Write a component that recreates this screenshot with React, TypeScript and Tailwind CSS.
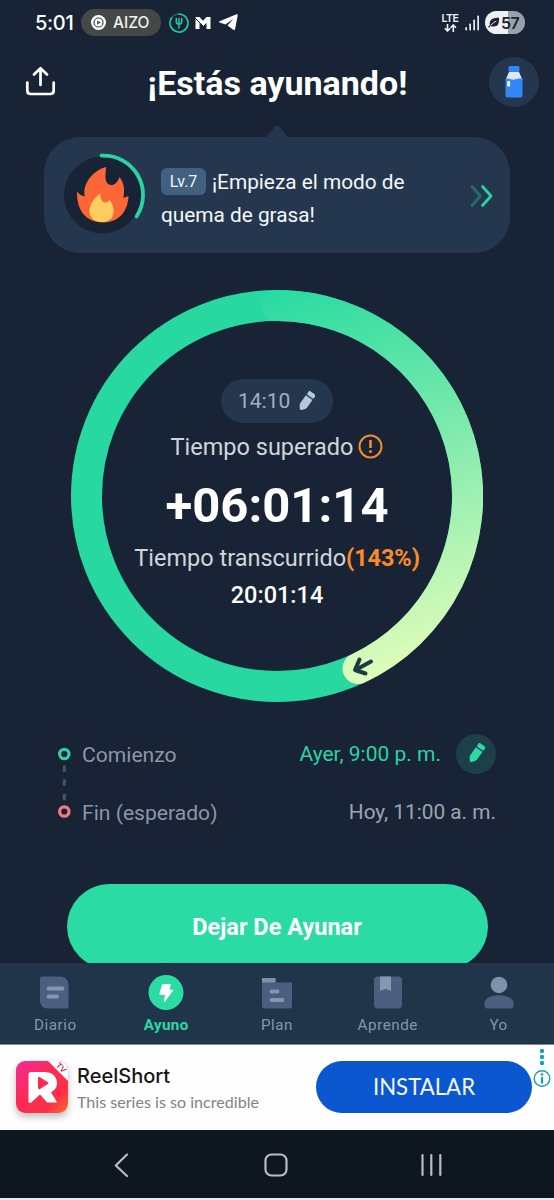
import type { ReactNode } from 'react';

function Pencil({ color, className }: { color: string; className?: string }) {
  return (
    <svg width="18" height="22" viewBox="0 0 20 24" className={className}>
      <g fill={color} transform="rotate(36 10 12)">
        <rect x="5.500" y="-0.5" width="9" height="5" rx="1.400" />
        <path d="M5.500 6h9v10.500c0 1-.3 1.700-.8 2.400L11.300 22c-.8 1-1.800 1-2.600 0L6.300 18.900c-.5-.7-.8-1.400-.8-2.400z" />
      </g>
    </svg>
  );
}

function StatusBar() {
  return (
    <div className="flex h-[45px] shrink-0 items-center justify-between pl-[35px] pr-[29px]">
      <div className="flex items-center">
        <span className="w-[46px] font-['Inter'] text-[20px] font-medium leading-6 tracking-[-0.3px] text-white">5:01</span>
        <div className="flex h-[27px] w-[80px] items-center rounded-full bg-[#444846] pl-[10px]">
          <svg width="15" height="15" viewBox="0 0 16 16">
            <circle cx="8" cy="8" r="8" fill="#fff" />
            <circle cx="8" cy="8" r="4.800" fill="none" stroke="#444846" strokeWidth="1.300" />
            <path d="M6.600 5.800v4.400L10.300 8z" fill="#444846" />
          </svg>
          <span className="ml-[7px] font-['Inter'] text-[15.500px] font-medium leading-5 text-[#f1f1f1]">AIZO</span>
        </div>
        <svg width="20" height="20" viewBox="0 0 20 20" className="ml-2" fill="none" stroke="#22c79b" strokeLinecap="round">
          <path d="M10 1a9 9 0 1 1-7.500 4" strokeWidth="1.700" />
          <path d="M2.500 5A9 9 0 0 1 10 1" strokeWidth="1.200" opacity=".55" />
          <path d="M7.300 5.500V9c0 2.800 5.400 2.800 5.400 0V5.500M10 5.500V15" strokeWidth="1.500" />
        </svg>
        <svg width="16" height="14" viewBox="0 0 16 14" className="ml-[6px]" fill="#fff">
          <path d="M.5 1h4L8 4.800 11.500 1h4v12h-4V7L8 10.300 4.500 7v6h-4z" />
          <path d="M0 2l8.500 8.500" stroke="#182435" strokeWidth="1" />
        </svg>
        <svg width="19" height="17" viewBox="0 0 19 17" className="ml-[8px]" fill="#fff">
          <path d="M.6 7.300L17.500.3c.9-.3 1.400.1 1.200 1.100l-2.600 13.500c-.2 1.100-.9 1.400-1.800.8L8.500 11.500l6-6.700-8 5.600L.7 8.600C-.2 8.300-.2 7.700.6 7.300z" />
        </svg>
      </div>

      <div className="flex items-center">
        <div className="flex w-[18px] flex-col items-center">
          <span className="font-['Inter'] text-[10.500px] font-semibold leading-[10px] tracking-[-0.500px] text-[#eef1f4]">LTE</span>
          <svg width="13" height="8" viewBox="0 0 13 8" fill="none" stroke="#eef1f4" strokeWidth="1.600">
            <path d="M3.500 0v7M.8 4.300l2.700 2.700 2.700-2.700M9.300 8V1M6.600 3.700L9.300 1 12 3.700" />
          </svg>
        </div>
        <svg width="15" height="16" viewBox="0 0 15 16" className="ml-[6px]" fill="#e9edf1">
          <rect x="0.300" y="12" width="1.700" height="3.500" rx=".8" />
          <rect x="4.300" y="8.500" width="1.700" height="7" rx=".8" />
          <rect x="8.300" y="4.500" width="1.700" height="11" rx=".8" />
          <rect x="12.300" y="0.500" width="1.700" height="15" rx=".8" />
        </svg>
        <div className="ml-[5px] flex h-[23px] w-[40px] items-center overflow-hidden rounded-full bg-linear-to-r from-[#eef0f3] from-58% to-[#9aa1ab] to-58% pl-[3px]">
          <svg width="12" height="11" viewBox="0 0 12 11">
            <path d="M2 8.800C.5 3 4.500.6 11 .8c.5 6-1.500 9.600-7 8.600" fill="#182435" />
            <path d="M.5 10.300C3 7 5 5.500 8 4" stroke="#182435" strokeWidth="1.200" fill="none" />
            <path d="M2.600 8.300C4.500 6.400 6 5.200 8.300 4" stroke="#eef0f3" strokeWidth=".9" fill="none" />
          </svg>
          <span className="ml-px font-['Inter'] text-[16px] font-semibold leading-5 tracking-[-0.600px] text-[#182435]">57</span>
        </div>
      </div>
    </div>
  );
}

function Header() {
  return (
    <div className="flex h-[80px] shrink-0 items-start justify-between pl-[25px] pr-[15px] pt-[12px]">
      <svg width="32" height="31" viewBox="0 0 32 31" className="mt-[9px]" fill="none" stroke="#fff" strokeWidth="2.700" strokeLinecap="round" strokeLinejoin="round">
        <path d="M2.300 16.500v8c0 2.200 1.300 3.500 3.500 3.500h19.400c2.200 0 3.500-1.300 3.500-3.500v-8M15.500 19V2.500M9 8.500l6.500-6.300L22 8.500" />
      </svg>
      <h1 className="mt-[6px] pl-[9px] text-[34px] font-bold leading-10 text-white">¡Estás ayunando!</h1>
      <div className="flex size-[50px] items-center justify-center rounded-full bg-[#24374e]">
        <svg width="18" height="32" viewBox="0 0 18 32">
          <path d="M4 6h10l3.500 8H.5z" fill="#dce9fd" />
          <rect x="3.500" y="0" width="11" height="6" rx="1.500" fill="#3288f8" />
          <path d="M.5 13c3-1.600 5.500 1 8.500.6s5.500-1.600 8.500-.6v16.300c0 1.500-.7 2.200-2.200 2.200H2.700C1.200 31.500.5 30.800.5 29.300z" fill="#3288f8" />
          <rect x="2.300" y="15" width="2.800" height="5.500" rx=".8" fill="#fff" />
        </svg>
      </div>
    </div>
  );
}

function LevelCard() {
  return (
    <div className="flex shrink-0 flex-col items-center">
      <svg width="22" height="12" viewBox="0 0 22 12" fill="#24374e">
        <path d="M0 12L9.500 1.200q1.500-1.500 3 0L22 12z" />
      </svg>
      <div className="flex h-[116px] w-[466px] items-center rounded-[36px] bg-[#24374e] pl-[18px]">
        <svg width="84" height="84" viewBox="0 0 84 84">
          <circle cx="40.500" cy="42" r="38.500" fill="#182435" />
          <path d="M39.500 2.700A39.300 39.300 0 0 1 74.600 63.500" fill="none" stroke="#2ad3a2" strokeWidth="3.800" strokeLinecap="round" />
          <path d="M44 14c0 6-1.500 10 .5 15 1.500 3.600 6.500 4 9.300 1.300 2-2 2.800-3.800 3.800-6 4.500 6 5.400 12 3.700 20.500 2-.5 3.700-1.300 5.200-1.800-.5 15-9.500 26.500-25.500 26.500-16 0-26.500-11-26-31 2 2.500 4.500 4.400 7.800 5C20 30 32 17 44 14z" fill="#fd6637" />
          <path d="M38.500 40.500c-.3 4.500 1 9 5 9 2 0 3-1 3.700-2.800 7 7.300 6.300 21.300-5.700 22.300-11 .8-16-7.500-13.500-15 2-6 6.500-11 10.500-13.500z" fill="#fdcd60" />
        </svg>
        <div className="ml-[15px] w-[300px] pt-2 text-[20.800px] leading-[33px] text-[#f4f7fa]">
          <div className="flex items-center">
            <span className="-mt-[3px] mr-[6px] h-[27px] w-[45px] rounded-[6px] bg-[#42607f] text-center text-[16px] leading-[27px]">Lv.7</span>
            ¡Empieza el modo de
          </div>
          <div>quema de grasa!</div>
        </div>
        <svg width="24" height="24" viewBox="0 0 24 24" className="ml-[8px] mt-px" fill="none" strokeWidth="2.700" strokeLinecap="round" strokeLinejoin="round">
          <path d="M3 2.500l8.300 9.500L3 21.500" stroke="#286b6c" />
          <path d="M13.500 2.500L22 12l-8.500 9.500" stroke="#2ad3a2" />
        </svg>
      </div>
    </div>
  );
}

function FastingRing() {
  return (
    <div className="mx-auto mt-[37px] grid size-[412px] shrink-0">
      <svg width="412" height="412" viewBox="0 0 412 412" className="col-start-1 row-start-1" fill="none">
        <defs>
          <linearGradient id="trail" gradientUnits="userSpaceOnUse" x1="179" y1="0" x2="304" y2="396">
            <stop offset="0" stopColor="#25daa1" />
            <stop offset="1" stopColor="#e4fdba" />
          </linearGradient>
        </defs>
        <circle cx="206" cy="206" r="190.500" stroke="#27d8a0" strokeWidth="31" />
        <path d="M206 15.500A190.500 190.500 0 0 1 287 378.500" stroke="url(#trail)" strokeWidth="31" strokeLinecap="round" />
        <path d="M300 371.500L284.500 380M288.500 369.500l-4.500 10.500 10.500 3.500" stroke="#1d3944" strokeWidth="4" strokeLinecap="round" strokeLinejoin="round" />
      </svg>
      <div className="z-10 col-start-1 row-start-1 flex flex-col items-center pt-[89px]">
        <div className="flex h-[44px] w-[112px] items-center rounded-full bg-[#24374e] pl-[17px] pt-px text-[21px] text-[#a4b0bf]">
          14:10
          <Pencil color="#b7c8de" className="ml-[7px]" />
        </div>
        <div className="mt-[6px] flex h-9 items-center text-[23.500px] leading-9 text-[#d0d5dc]">
          Tiempo superado
          <svg width="25" height="25" viewBox="0 0 25 25" className="-mt-px ml-[5px]">
            <circle cx="12.500" cy="12.500" r="11" fill="none" stroke="#f68b28" strokeWidth="2" />
            <path d="M12.500 6v8" stroke="#f68b28" strokeWidth="2.600" />
            <circle cx="12.500" cy="17.500" r="1.500" fill="#f68b28" />
          </svg>
        </div>
        <div className="mt-[13px] text-[49px] font-bold leading-[56px] text-white">+06:01:14</div>
        <div className="mt-[8px] text-[23.500px] leading-8 text-[#d0d5dc]">
          Tiempo transcurrido<span className="font-bold tracking-[-0.100px] text-[#fb8c25]">(143%)</span>
        </div>
        <div className="mt-[5px] text-[23.500px] font-medium leading-8 text-white">20:01:14</div>
      </div>
    </div>
  );
}

function Schedule() {
  return (
    <div className="mt-[32px] flex h-[98px] shrink-0 pl-[57px] pr-[58px] text-[21.100px] text-[#8d97a4]">
      <svg width="14" height="98" viewBox="0 0 14 98" fill="none">
        <circle cx="7.300" cy="20" r="4.700" stroke="#35cda0" strokeWidth="3.200" />
        <path d="M7.300 32.500v4M7.300 46.500v4M7.300 61v4" stroke="#43536a" strokeWidth="3.200" strokeLinecap="round" />
        <circle cx="7.300" cy="77.500" r="4.700" stroke="#f27c7c" strokeWidth="3.200" />
      </svg>
      <div className="ml-[11px] flex flex-1 flex-col">
        <div className="flex h-[40px] items-center justify-between">
          <span className="pt-px">Comienzo</span>
          <div className="flex items-center text-[21px] text-[#2ad3a2]">
            <span className="pt-px">Ayer, 9:00 p. m.</span>
            <span className="ml-[15px] flex size-[40px] items-center justify-center rounded-full bg-[#1c3f49]">
              <Pencil color="#2adba4" />
            </span>
          </div>
        </div>
        <div className="mt-[18px] flex h-[40px] items-center justify-between pt-px">
          <span>Fin (esperado)</span>
          <span className="text-[20.800px] text-[#9ea5b0]">Hoy, 11:00 a. m.</span>
        </div>
      </div>
    </div>
  );
}

const tabs: { name: string; active?: boolean; icon: ReactNode }[] = [
  {
    name: 'Diario',
    icon: (
      <>
        <path d="M4 1.500h18c5 0 8.500 3.500 8.500 8.500v22c0 1-.6 1.600-1.600 1.600H10c-5.500 0-8-3.500-8-8V3.500c0-1.200.8-2 2-2z" transform="translate(1 0)" fill="#4b6080" />
        <path d="M11.500 13.500h14M11.500 21.500H20" stroke="#8496b0" strokeWidth="3.800" strokeLinecap="round" />
      </>
    ),
  },
  {
    name: 'Ayuno',
    active: true,
    icon: (
      <>
        <circle cx="18" cy="17.500" r="17.500" fill="#2adba4" />
        <path d="M14.500 9.500h7.800l-1.400 5.700h4L16.300 27l1.300-7.700h-5.800z" fill="#fff" stroke="#fff" strokeLinejoin="round" />
      </>
    ),
  },
  {
    name: 'Plan',
    icon: (
      <>
        <path d="M3 3h13.500v4.500H33V31c0 1.600-.9 2.500-2.500 2.500h-25C3.900 33.500 3 32.600 3 31z" fill="#4b6080" />
        <path d="M4 3h11c1 0 1.500.5 1.500 1.500v3H3V4c0-.6.400-1 1-1z" fill="#8091ab" />
        <path d="M12.500 16.500h6M12.500 25h11" stroke="#8496b0" strokeWidth="3.800" strokeLinecap="round" />
      </>
    ),
  },
  {
    name: 'Aprende',
    icon: (
      <>
        <rect x="4" y="1.500" width="28" height="32" rx="4" fill="#4b6080" />
        <path d="M10 1.500h11V16l-5.500-2.200L10 16z" fill="#8496b0" />
      </>
    ),
  },
  {
    name: 'Yo',
    icon: (
      <>
        <circle cx="18" cy="10" r="8.300" fill="#8091ab" />
        <path d="M3.500 28c0-5 7-7.800 14.500-7.800S32.500 23 32.500 28v2.500c0 2-1 3-3 3h-23c-2 0-3-1-3-3z" fill="#4b6080" />
      </>
    ),
  },
];

function TabBar() {
  return (
    <div className="grid h-[81px] shrink-0 grid-cols-5 bg-[#20344a]">
      {tabs.map(tab => (
        <div key={tab.name} className="flex flex-col items-center pt-[12px]">
          <svg width="36" height="36" viewBox="0 0 36 36">{tab.icon}</svg>
          <span
            className={
              tab.active
                ? 'mt-[4px] text-[15.200px] font-bold leading-5 tracking-[0.400px] text-[#2adba4]'
                : 'mt-[4px] text-[15.200px] leading-5 tracking-[0.550px] text-[#8796a9]'
            }
          >
            {tab.name}
          </span>
        </div>
      ))}
    </div>
  );
}

function AdBanner() {
  return (
    <div className="flex h-[86px] shrink-0 border-t border-[#7d8791] bg-[#fefefe] pl-[16px] font-['Lato',sans-serif]">
      <div className="mt-[16px] size-[52px] rounded-[9px] shadow-[0_4px_7px_rgba(0,0,0,0.25)]">
        <svg width="52" height="52" viewBox="0 0 52 52">
          <defs>
            <linearGradient id="reel" x1="0" y1="0" x2="1" y2="1">
              <stop offset="0" stopColor="#f22d9c" />
              <stop offset=".45" stopColor="#fd2a52" />
              <stop offset=".75" stopColor="#fd3047" />
              <stop offset="1" stopColor="#fb6b2e" />
            </linearGradient>
            <clipPath id="tile"><rect width="52" height="52" rx="9" /></clipPath>
          </defs>
          <g clipPath="url(#tile)">
            <rect width="52" height="52" fill="url(#reel)" />
            <path d="M32 0h20v20z" fill="#fff" />
          </g>
          <path d="M15 11h14c7 0 12 4.500 12 11 0 4.500-2.500 7.800-6 9.200l5.500 9c.4.800.1 1.300-.8 1.300h-8.500L24 33.500l-8.500 7.700c-1.500 1.300-3 .7-3-1V13.500c0-1.500 1-2.500 2.500-2.500z" fill="#fff" />
          <path d="M22 17.500c0-1.300 1-1.800 2-1.200l7.500 4.700c1 .7 1 1.600 0 2.300L24 28c-1 .6-2 .1-2-1.200z" fill="#fd2a52" />
          <text x="45" y="9.500" transform="rotate(45 45 7)" textAnchor="middle" fontFamily="Lato" fontWeight="700" fontSize="8" fill="#c0304f">TV</text>
        </svg>
      </div>
      <div className="ml-[9px] mt-[17px] w-[240px]">
        <div className="font-['Inter'] text-[20px] font-medium leading-7 text-[#161616]">ReelShort</div>
        <div className="text-[16.100px] leading-6 text-[#808386]">This series is so incredible</div>
      </div>
      <div className="-ml-px mt-[16px] h-[52px] w-[216px] rounded-full bg-[#0b57d0] text-center text-[22.200px] leading-[52px] text-[#f3f8ff]">INSTALAR</div>
      <svg width="20" height="46" viewBox="0 0 20 46" className="mt-[2px]" fill="#12a3b4">
        <circle cx="10" cy="4" r="2.200" />
        <circle cx="10" cy="10" r="2.200" />
        <circle cx="10" cy="16" r="2.200" />
        <circle cx="10" cy="31.500" r="7.800" fill="none" stroke="#12a3b4" strokeWidth="1.400" />
        <circle cx="10" cy="27.500" r="1.300" />
        <path d="M8.900 30h2.200v6.500H8.900z" />
      </svg>
    </div>
  );
}

function NavBar() {
  return (
    <div className="flex h-[70px] shrink-0 items-start border-b-2 border-[#e8eaec] bg-[#0e161f]">
      <svg width="554" height="67" viewBox="0 0 554 67" fill="none" stroke="#b9bdc2" strokeWidth="2.200" strokeLinecap="round" strokeLinejoin="round">
        <path d="M127 24.500L115.800 35.500 127 46" />
        <rect x="265.500" y="24.500" width="21" height="21" rx="6" />
        <path d="M422.500 25v20M431.300 25v20M440.300 25v20" />
      </svg>
    </div>
  );
}

export default function App() {
  return (
    <div className="flex h-[1200px] w-[554px] flex-col overflow-hidden bg-[#182435] font-['Roboto',sans-serif]">
      <StatusBar />
      <Header />
      <LevelCard />
      <FastingRing />
      <Schedule />
      <div className="mt-[52px] h-[79px] shrink-0 overflow-hidden">
        <button className="mx-auto block h-[85px] w-[421px] rounded-full bg-[#2adba4] pt-[3px] text-[23.500px] font-bold text-white">
          Dejar De Ayunar
        </button>
      </div>
      <TabBar />
      <AdBanner />
      <NavBar />
    </div>
  );
}
